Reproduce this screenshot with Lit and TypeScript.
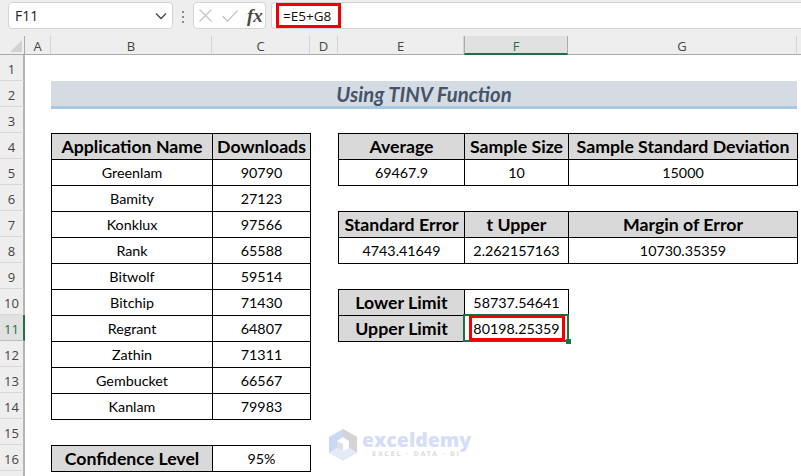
import { LitElement, html, css } from "lit";
import { customElement } from "lit/decorators.js";

const COLS = ["A", "B", "C", "D", "E", "F", "G", ""];

type Cell = [col: number, row: number, text: string, head?: boolean];

const names = ["Greenlam", "Bamity", "Konklux", "Rank", "Bitwolf", "Bitchip", "Regrant", "Zathin", "Gembucket", "Kanlam"];
const downloads = ["90790", "27123", "97566", "65588", "59514", "71430", "64807", "71311", "66567", "79983"];

const CELLS: Cell[] = [
  [2, 4, "Application Name", true],
  [3, 4, "Downloads", true],
  ...names.map((n, i): Cell => [2, 5 + i, n]),
  ...downloads.map((n, i): Cell => [3, 5 + i, n]),
  [2, 16, "Confidence Level", true],
  [3, 16, "95%"],
  [5, 4, "Average", true],
  [6, 4, "Sample Size", true],
  [7, 4, "Sample Standard Deviation", true],
  [5, 5, "69467.9"],
  [6, 5, "10"],
  [7, 5, "15000"],
  [5, 7, "Standard Error", true],
  [6, 7, "t Upper", true],
  [7, 7, "Margin of Error", true],
  [5, 8, "4743.41649"],
  [6, 8, "2.262157163"],
  [7, 8, "10730.35359"],
  [5, 10, "Lower Limit", true],
  [6, 10, "58737.54641"],
  [5, 11, "Upper Limit", true],
  [6, 11, "80198.25359"],
];

@customElement("app-root")
export class AppRoot extends LitElement {
  static styles = css`
    :host {
      display: block;
      width: 801px;
      height: 476px;
      overflow: hidden;
      position: relative;
      background: #fff;
      font-family: "Lato", "Carlito", sans-serif;
      color: #000;
    }
    .toolbar {
      height: 36px;
      box-sizing: border-box;
      background: #eeeeee;
      display: flex;
      align-items: flex-start;
      padding: 2px 0 0 8px;
    }
    .namebox {
      width: 165px;
      height: 27px;
      box-sizing: border-box;
      background: #fff;
      border: 1px solid #d4d4d4;
      border-radius: 4px;
      display: flex;
      align-items: center;
      justify-content: space-between;
      padding: 0 5px 0 6px;
      font: 14px "Open Sans", sans-serif;
      color: #222;
    }
    .dots {
      width: 20px;
      display: flex;
      flex-direction: column;
      align-items: center;
      gap: 3px;
      padding-top: 9px;
    }
    .dots i {
      width: 2px;
      height: 2px;
      background: #8c8c8c;
    }
    .fxbox {
      width: 73px;
      height: 27px;
      box-sizing: border-box;
      background: #fff;
      border: 1px solid #d4d4d4;
      border-radius: 4px;
      display: flex;
      align-items: center;
      padding-left: 5px;
    }
    .x { margin-right: 10px; }
    .v { margin-right: 9px; }
    .fx {
      font: italic 700 19px/24px "Liberation Serif", serif;
      color: #4a4a4a;
    }
    .formula {
      flex: 1;
      margin-left: 5px;
      height: 27px;
      box-sizing: border-box;
      background: #fff;
      border: 1px solid #d4d4d4;
      border-right: 0;
      border-radius: 4px 0 0 4px;
      padding: 0 0 0 4px;
      display: flex;
    }
    .redbox {
      box-sizing: border-box;
      width: 65px;
      height: 25px;
      border: 3px solid #f00000;
      font: 13.5px "Open Sans", sans-serif;
      color: #111;
      display: flex;
      align-items: center;
      padding-left: 4px;
    }
    .sheet {
      display: grid;
      grid-template-columns: 25px 26px 161px 98px 28px 126px 104px 229px 29px;
      grid-template-rows: 19px repeat(17, 26px);
      background: #fff;
    }
    .corner {
      background: #eeeeee;
      border-right: 1px solid #aaa;
      border-bottom: 1px solid #aaa;
      display: flex;
      align-items: flex-end;
      justify-content: flex-end;
      padding: 0 2px 2px 0;
    }
    .ch {
      background: #eeeeee;
      border-bottom: 1px solid #aaa;
      border-right: 1px solid #d4d4d4;
      box-sizing: border-box;
      display: flex;
      align-items: center;
      justify-content: center;
      font: 13px "Open Sans", sans-serif;
      color: #444;
      padding-top: 2px;
    }
    .ch.on {
      background: #e1e1e1;
      color: #1f7145;
      border-bottom: 2px solid #1f7145;
      border-right: 1px solid #aaa;
      border-left: 1px solid #aaa;
    }
    .rh {
      grid-column: 1;
      background: #eeeeee;
      border-right: 2px solid #b4b4b4;
      border-bottom: 1px solid #d8d8d8;
      box-sizing: border-box;
      display: flex;
      align-items: center;
      justify-content: center;
      font: 13px "Open Sans", sans-serif;
      color: #444;
      padding-top: 3px;
    }
    .rh.on {
      background: #e1e1e1;
      color: #1f7145;
      border-right: 2px solid #1f7145;
      border-bottom-color: #bbb;
    }
    .title {
      grid-column: 3 / 9;
      grid-row: 3;
      background: #d5dbe3;
      border-bottom: 3px solid #a9c8e8;
      margin-bottom: -2px;
      display: flex;
      align-items: center;
      justify-content: center;
      font-size: 20.3px;
      font-weight: 700;
      font-style: italic;
      color: #44546a;
      z-index: 1;
    }
    .cell {
      border: 1px solid #000;
      margin: 0 -1px -1px 0;
      display: flex;
      align-items: center;
      justify-content: center;
      font-size: 14.3px;
      white-space: nowrap;
      position: relative;
      background: #fff;
    }
    .cell.head {
      background: #d9d9d9;
      font-weight: 700;
      font-size: 17.7px;
    }
    .sel {
      position: absolute;
      inset: -2px -1px -1px -2px;
      border: 2px solid #1f7145;
      pointer-events: none;
    }
    .red {
      position: absolute;
      inset: -1px 3px 0 4px;
      border: 3px solid #f00000;
      pointer-events: none;
    }
    .handle {
      position: absolute;
      right: -3px;
      bottom: -3px;
      width: 5px;
      height: 5px;
      background: #1f7145;
    }
    .mark {
      position: absolute;
      left: 329px;
      top: 429px;
      display: flex;
      gap: 5px;
      pointer-events: none;
    }
    .mark-text {
      display: flex;
      flex-direction: column;
      align-items: flex-start;
    }
    .mark-name {
      font: 800 19.5px/21px "Open Sans", sans-serif;
      color: #d5def6;
    }
    .mark-sub {
      font: 700 6.5px/8px "DejaVu Sans", sans-serif;
      letter-spacing: 1.5px;
      color: #dedede;
      padding-left: 10px;
      white-space: pre;
    }
  `;

  private place(col: number, row: number) {
    return `grid-column:${col + 1};grid-row:${row + 1}`;
  }

  render() {
    return html`
      <div class="toolbar">
        <div class="namebox">
          <span>F11</span>
          <svg width="12" height="8" viewBox="0 0 12 8"><path d="M1 1.5 6 6.5 11 1.5" fill="none" stroke="#444" stroke-width="1.3"/></svg>
        </div>
        <div class="dots"><i></i><i></i><i></i></div>
        <div class="fxbox">
          <svg class="x" width="13" height="13" viewBox="0 0 13 13"><path d="M.5.5 12.5 12.5M12.5.5.5 12.5" fill="none" stroke="#c4c4c4" stroke-width="1.2"/></svg>
          <svg class="v" width="16" height="12" viewBox="0 0 16 12"><path d="M.5 6 5.5 11.2 15.5.5" fill="none" stroke="#c4c4c4" stroke-width="1.2"/></svg>
          <span class="fx">fx</span>
        </div>
        <div class="formula"><div class="redbox">=E5+G8</div></div>
      </div>
      <div class="sheet">
        <div class="corner">
          <svg width="12" height="12" viewBox="0 0 12 12"><path d="M12 0V12H0Z" fill="#d2d2d2"/></svg>
        </div>
        ${COLS.map(
          (c, i) => html`<div class="ch ${c === "F" ? "on" : ""}" style=${this.place(i + 1, 0)}>${c}</div>`
        )}
        ${Array.from({ length: 17 }, (_, i) => i + 1).map(
          (r) => html`<div class="rh ${r === 11 ? "on" : ""}" style="grid-row:${r + 1}">${r < 17 ? r : ""}</div>`
        )}
        <div class="title">Using TINV Function</div>
        ${CELLS.map(
          ([c, r, t, head]) => html`<div class="cell ${head ? "head" : ""}" style=${this.place(c, r)}>
            ${t}
            ${c === 6 && r === 11
              ? html`<div class="sel"></div><div class="red"></div><div class="handle"></div>`
              : ""}
          </div>`
        )}
      </div>
      <div class="mark">
        <svg width="28" height="32" viewBox="0 0 28 32">
          <path d="M14 0 28 8V16L14 8Z" fill="#d9d9d9"/>
          <path d="M14 0 0 8V24L8 19V12L14 8Z" fill="#c9d8f5"/>
          <path d="M28 8V24L20 19V12L14 8V0Z" fill="#d4d4d4"/>
          <path d="M0 24 14 32 28 24 20 19 14 22 8 19Z" fill="#e3ebf8"/>
          <path d="M8 12 14 15V22L8 19Z" fill="#e0e0e0"/>
        </svg>
        <div class="mark-text">
          <span class="mark-name">exceldemy</span>
          <span class="mark-sub">EXCEL · DATA · BI</span>
        </div>
      </div>
    `;
  }
}
